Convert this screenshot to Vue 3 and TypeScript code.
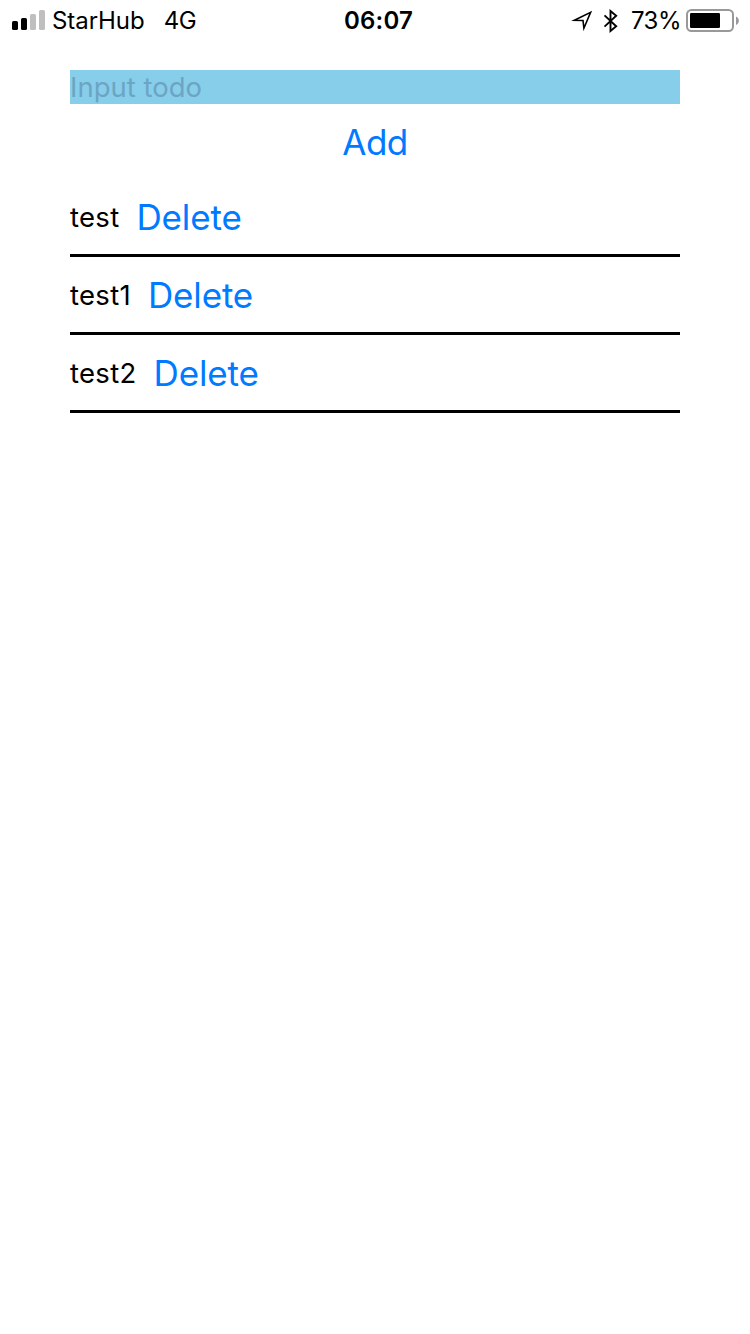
<script setup lang="ts">
import { ref } from 'vue'

interface Todo {
  id: number
  text: string
}

const draft = ref('')
const nextId = ref(3)
const todos = ref<Todo[]>([
  { id: 0, text: 'test' },
  { id: 1, text: 'test1' },
  { id: 2, text: 'test2' },
])

function addTodo(): void {
  if (!draft.value) return
  todos.value.push({ id: nextId.value++, text: draft.value })
  draft.value = ''
}

function removeTodo(id: number): void {
  todos.value = todos.value.filter((t) => t.id !== id)
}
</script>

<template>
  <div class="screen">
    <header class="status">
      <div class="side">
        <svg class="signal" width="34" height="20" viewBox="0 0 34 20">
          <rect x="0" y="11" width="6" height="9" rx="1.6" fill="#000" />
          <rect x="9" y="8" width="6" height="12" rx="1.6" fill="#000" />
          <rect x="18" y="4" width="6" height="16" rx="1.6" fill="#bfbfbf" />
          <rect x="27" y="0" width="6" height="20" rx="1.6" fill="#bfbfbf" />
        </svg>
        <span class="carrier">StarHub</span>
        <span class="network">4G</span>
      </div>
      <span class="time">06:07</span>
      <div class="side right">
        <svg class="location" width="22" height="22" viewBox="0 0 22 22">
          <path d="M3.4 10.2 L19.6 2.4 L12.9 18.2 L12 10.5 Z" fill="none" stroke="#000" stroke-width="1.6" stroke-miterlimit="8" />
        </svg>
        <svg class="bluetooth" width="16" height="24" viewBox="0 0 16 24">
          <path d="M1.5 6.4 L13.2 17.2 L7.5 22 V2 L13.2 6.8 L1.5 17.6" fill="none" stroke="#000" stroke-width="1.9" />
        </svg>
        <span class="percent">73%</span>
        <svg class="battery" width="54" height="24" viewBox="0 0 54 24">
          <rect x="1" y="1" width="46" height="21" rx="4.5" fill="none" stroke="#999" stroke-width="2" />
          <rect x="4" y="4" width="30" height="15" rx="1.2" fill="#000" />
          <path d="M50 7.5 C53.8 9 53.8 14.5 50 16 Z" fill="#999" />
        </svg>
      </div>
    </header>
    <main class="content">
      <input v-model="draft" class="field" type="text" placeholder="Input todo" />
      <button class="action add" @click="addTodo">Add</button>
      <ul class="list">
        <li v-for="todo in todos" :key="todo.id" class="row">
          <span class="label">{{ todo.text }}</span>
          <button class="action" @click="removeTodo(todo.id)">Delete</button>
        </li>
      </ul>
    </main>
  </div>
</template>

<style>
body {
  margin: 0;
  background: #fff;
}
</style>

<style scoped>
.screen {
  box-sizing: border-box;
  width: 750px;
  height: 1334px;
  background: #fff;
  color: #000;
  font-family: Inter, "Liberation Sans", sans-serif;
}
.status {
  display: grid;
  box-sizing: border-box;
  grid-template-columns: 300px 1fr 300px;
  align-items: center;
  height: 40px;
  padding-top: 2px;
  font-size: 24px;
  line-height: 38px;
  white-space: nowrap;
}
.side {
  display: flex;
  align-items: center;
  height: 38px;
  padding-left: 12px;
}
.right {
  justify-content: flex-end;
  padding: 0 10px 0 0;
}
.signal {
  margin: 0 6px 2px 0;
}
.carrier {
  letter-spacing: -0.05px;
}
.network {
  margin-left: 19px;
  letter-spacing: -0.5px;
}
.time {
  padding-left: 7px;
  text-align: center;
  font-weight: 600;
  letter-spacing: 0.2px;
}
.location {
  margin-right: 10px;
}
.bluetooth {
  margin: 0 11.5px 1px 0;
}
.percent {
  letter-spacing: -0.5px;
}
.battery {
  margin-left: 5px;
}
.content {
  display: flex;
  flex-direction: column;
  padding: 30px 70px 0;
}
.field {
  box-sizing: border-box;
  width: 100%;
  height: 34px;
  margin: 0;
  padding: 0;
  border: 0;
  border-radius: 0;
  outline: 0;
  background: #87ceeb;
  color: #000;
  font: 400 27.5px/34px Inter, "Liberation Sans", sans-serif;
}
.field::placeholder {
  color: #6ca5c3;
  opacity: 1;
}
.action {
  padding: 0;
  border: 0;
  background: none;
  color: #007aff;
  font: 400 35px/43px Inter, "Liberation Sans", sans-serif;
  letter-spacing: -0.15px;
}
.add {
  align-self: center;
  margin: 17px 0 15px;
  letter-spacing: -0.5px;
}
.list {
  margin: 0;
  padding: 0;
  list-style: none;
}
.row {
  display: flex;
  box-sizing: border-box;
  align-items: center;
  height: 78px;
  gap: 17px;
  padding-top: 2px;
  border-bottom: 3px solid #000;
}
.label {
  margin-bottom: 2px;
  font-size: 27.5px;
  line-height: 34px;
  letter-spacing: 0.3px;
}
</style>
